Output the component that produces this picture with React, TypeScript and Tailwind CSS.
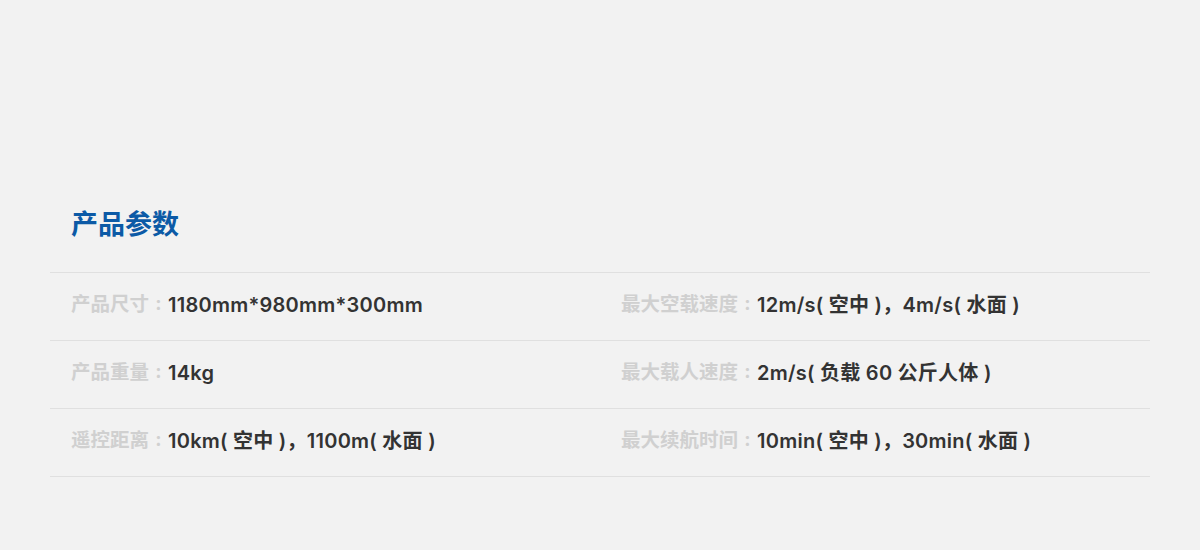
const specs: [string, string][] = [
  ["产品尺寸", "1180mm*980mm*300mm"],
  ["最大空载速度", "12m/s( 空中 )，4m/s( 水面 )"],
  ["产品重量", "14kg"],
  ["最大载人速度", "2m/s( 负载 60 公斤人体 )"],
  ["遥控距离", "10km( 空中 )，1100m( 水面 )"],
  ["最大续航时间", "10min( 空中 )，30min( 水面 )"],
];

export default function App() {
  return (
    <div
      className="w-[1200px] h-[550px] bg-[#f2f2f2] pt-[205px] px-[50px]"
      style={{ fontFamily: 'Inter, "Noto Sans CJK SC", sans-serif' }}
    >
      <h2 className="pl-[21px] text-[27px] leading-[40px] font-bold text-[#0c5aa6]">产品参数</h2>
      <div className="mt-[27px] grid grid-cols-2 border-t border-[#e0e0e0]">
        {specs.map(([label, value]) => (
          <div key={label} className="h-[68px] flex items-center pb-[4px] pl-[21px] border-b border-[#e0e0e0]">
            <span className="text-[19.5px] font-bold text-[#d0d0d0]">{label}</span>
            <span className="inline-block w-[19px] text-center text-[19px] font-bold text-[#d0d0d0]">:</span>
            <span className="text-[20px] font-semibold tracking-[0.25px] text-[#333333]">{value}</span>
          </div>
        ))}
      </div>
    </div>
  );
}
